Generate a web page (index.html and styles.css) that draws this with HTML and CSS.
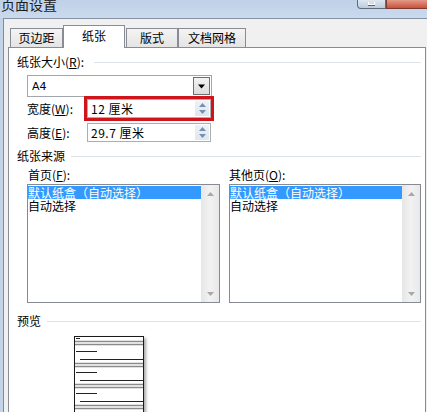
FILE: index.html
```html
<!DOCTYPE html>
<html lang="zh-CN">
<head>
<meta charset="utf-8">
<title>页面设置</title>
<link rel="stylesheet" href="styles.css">
</head>
<body>
<div class="window">
  <div class="titlebar">
    <span class="title">页面设置</span>
    <div class="caption">
      <span class="cap-max"><i class="cap-max-glyph"></i></span>
      <span class="cap-close"></span>
    </div>
  </div>
  <div class="client">
    <div class="tabs">
      <div class="tab t1">页边距</div>
      <div class="tab t2 active">纸张</div>
      <div class="tab t3">版式</div>
      <div class="tab t4">文档网格</div>
    </div>
    <div class="panel">
      <div class="group first"><span>纸张大小(<u>R</u>):</span><i class="rule"></i></div>
      <div class="select"><span class="select-text">A4</span><span class="drop"><svg width="9" height="5" viewBox="0 0 9 5"><path d="M1 0.5 H8 L4.5 4.5 Z" fill="#000"/></svg></span></div>
      <div class="field f-width">
        <span class="label">宽度(<u>W</u>):</span>
        <div class="spin mark"><span class="spin-text">12 厘米</span><span class="spinbtns"><svg width="7" height="4" viewBox="0 0 7 4"><path d="M3.5 0 L7 4 H0 Z" fill="#7890b0"/></svg><svg width="7" height="4" viewBox="0 0 7 4"><path d="M0 0 H7 L3.5 4 Z" fill="#7890b0"/></svg></span></div>
      </div>
      <div class="field f-height">
        <span class="label">高度(<u>E</u>):</span>
        <div class="spin"><span class="spin-text">29.7 厘米</span><span class="spinbtns"><svg width="7" height="4" viewBox="0 0 7 4"><path d="M3.5 0 L7 4 H0 Z" fill="#7890b0"/></svg><svg width="7" height="4" viewBox="0 0 7 4"><path d="M0 0 H7 L3.5 4 Z" fill="#7890b0"/></svg></span></div>
      </div>
      <div class="group source"><span>纸张来源</span><i class="rule"></i></div>
      <div class="columns">
        <div class="col">
          <div class="col-label">首页(<u>F</u>):</div>
          <div class="listbox">
            <ul class="items">
              <li class="sel">默认纸盒（自动选择）</li>
              <li>自动选择</li>
            </ul>
            <div class="scrollbar">
              <span class="arrow"><svg width="7" height="4" viewBox="0 0 7 4"><path d="M3.5 0 L7 4 H0 Z" fill="#a8a8a8"/></svg></span>
              <span class="arrow"><svg width="7" height="4" viewBox="0 0 7 4"><path d="M0 0 H7 L3.5 4 Z" fill="#a8a8a8"/></svg></span>
            </div>
          </div>
        </div>
        <div class="col">
          <div class="col-label">其他页(<u>O</u>):</div>
          <div class="listbox">
            <ul class="items">
              <li class="sel">默认纸盒（自动选择）</li>
              <li>自动选择</li>
            </ul>
            <div class="scrollbar">
              <span class="arrow"><svg width="7" height="4" viewBox="0 0 7 4"><path d="M3.5 0 L7 4 H0 Z" fill="#a8a8a8"/></svg></span>
              <span class="arrow"><svg width="7" height="4" viewBox="0 0 7 4"><path d="M0 0 H7 L3.5 4 Z" fill="#a8a8a8"/></svg></span>
            </div>
          </div>
        </div>
      </div>
      <div class="group preview-title"><span>预览</span><i class="rule"></i></div>
      <div class="page">
        <svg width="68" height="90" viewBox="0 0 68 90">
          <g stroke="#222" stroke-width="1">
            <line x1="1" y1="1.5" x2="5" y2="1.5"/>
            <line x1="1" y1="14.5" x2="22" y2="14.5"/>
            <line x1="5" y1="22.5" x2="68" y2="22.5"/>
            <line x1="1" y1="35.5" x2="22" y2="35.5"/>
            <line x1="5" y1="43.5" x2="68" y2="43.5"/>
            <line x1="1" y1="56.5" x2="22" y2="56.5"/>
            <line x1="5" y1="64.5" x2="68" y2="64.5"/>
            <line x1="1" y1="77.5" x2="22" y2="77.5"/>
            <line x1="5" y1="85.5" x2="68" y2="85.5"/>
          </g>
          <g stroke="#8a8a8a" stroke-width="1.5">
            <line x1="0" y1="4.5" x2="68" y2="4.5"/>
            <line x1="0" y1="7.5" x2="68" y2="7.5"/>
            <line x1="0" y1="26.5" x2="68" y2="26.5"/>
            <line x1="0" y1="29.5" x2="68" y2="29.5"/>
            <line x1="0" y1="47.5" x2="68" y2="47.5"/>
            <line x1="0" y1="50.5" x2="68" y2="50.5"/>
            <line x1="0" y1="68.5" x2="68" y2="68.5"/>
            <line x1="0" y1="71.5" x2="68" y2="71.5"/>
          </g>
        </svg>
      </div>
    </div>
  </div>
</div>
</body>
</html>
```
FILE: styles.css
```css
* { box-sizing: border-box; margin: 0; padding: 0; }
html, body { width: 427px; height: 412px; overflow: hidden; }
body {
  background: #c3d4e9;
  font-family: "Noto Sans CJK SC", "Liberation Sans", sans-serif;
  font-size: 12px;
  color: #000;
}
u { text-decoration: underline; }
.window { display: flex; flex-direction: column; height: 412px; }

.titlebar {
  height: 18px;
  display: flex;
  align-items: flex-start;
  background: linear-gradient(#bfd1e8, #cbdaed);
  overflow: hidden;
}
.title {
  font-size: 14px;
  line-height: 14px;
  margin-top: -3px;
  margin-left: 1px;
  color: #1c1c1c;
}
.caption { margin-left: auto; display: flex; }
.cap-max {
  width: 29px; height: 9px;
  border: 1px solid #5f6c7e; border-top: none;
  border-radius: 0 0 0 4px;
  background: linear-gradient(#dfe7f1, #bccbdd);
  display: flex; justify-content: center;
}
.cap-max-glyph {
  width: 7px; height: 3px; margin-top: 2px;
  border: 1px solid #fff; border-top: none;
  box-shadow: 0 1px 0 #56637a;
}
.cap-close {
  width: 41px; height: 9px;
  border: 1px solid #7d3b30; border-top: none; border-right: none;
  background: linear-gradient(#e39a88, #c9513a);
}

.client {
  flex: 1;
  min-height: 0;
  margin-left: 3px;
  border-left: 1px solid #7f8b9c;
  border-top: 1px solid #8391a3;
  background: #f0f0f0;
  display: flex;
  flex-direction: column;
}

.tabs {
  display: flex;
  align-items: flex-end;
  padding: 6px 0 0 6px;
  margin-bottom: -1px;
  position: relative;
  z-index: 1;
}
.tab {
  height: 20px;
  line-height: 18px;
  text-align: center;
  border: 1px solid #898c95;
  background: linear-gradient(#f4f4f4, #e4e4e4);
  font-size: 12px;
}
.tab.active {
  height: 23px;
  line-height: 20px;
  border-bottom: none;
  background: #fff;
}
.t1 { width: 53px; }
.t2 { width: 62px; }
.t3 { width: 52px; margin-left: 1px; }
.t4 { width: 68px; }

.panel {
  flex: 1;
  margin-left: 4px;
  width: 418px;
  border: 1px solid #898c95;
  border-bottom: none;
  background: #fff;
  display: flex;
  flex-direction: column;
}

.group {
  display: flex;
  align-items: center;
  height: 14px;
  line-height: 14px;
  padding-left: 8px;
  padding-right: 4px;
}
.group .rule {
  flex: 1;
  height: 1px;
  background: #dde3e9;
  margin-left: 6px;
}
.group.first { margin-top: 7px; }
.group.first .rule { margin-left: 10px; }
.group.source { margin-top: 7px; }
.group.preview-title { margin-top: 11px; }

.select {
  margin: 6px 0 0 18px;
  width: 185px;
  height: 22px;
  border: 1px solid #a2a6ad;
  background: #fff;
  display: flex;
  align-items: center;
  padding: 1px 1px 1px 4px;
}
.select-text { flex: 1; font-family: "DejaVu Sans", "Noto Sans CJK SC", sans-serif; font-size: 11px; }
.drop {
  width: 17px;
  height: 18px;
  border: 1px solid #707070;
  background: linear-gradient(#f3f3f3, #dcdcdc);
  display: flex;
  align-items: center;
  justify-content: center;
}

.field {
  display: flex;
  align-items: center;
  padding-left: 18px;
}
.f-width { margin-top: 2px; }
.f-height { margin-top: 5px; }
.label { width: 60px; }
.spin {
  width: 124px;
  height: 19px;
  border: 1px solid #abadb3;
  background: #fff;
  display: flex;
  align-items: center;
  padding: 0 1px 0 3px;
}
.spin.mark { outline: 3px solid #d0141c; }
.spin-text { flex: 1; letter-spacing: 0.5px; }
.spinbtns {
  width: 14px;
  height: 15px;
  background: linear-gradient(#eef2f7, #dfe6ef);
  display: flex;
  flex-direction: column;
  align-items: center;
  justify-content: space-around;
  padding: 1px 0;
}
.spinbtns svg { display: block; }

.columns {
  display: grid;
  grid-template-columns: 193px 192px;
  column-gap: 9px;
  padding-left: 18px;
  margin-top: 5px;
}
.col-label { height: 14px; line-height: 14px; padding-left: 1px; }
.col + .col .col-label { padding-left: 0; }
.listbox {
  margin-top: 2px;
  height: 119px;
  border: 1px solid #868a92;
  background: #fff;
  display: flex;
}
.items { flex: 1; list-style: none; padding-top: 1px; }
.items li {
  height: 14px;
  line-height: 14px;
  white-space: nowrap;
}
.items li.sel { height: 13px; line-height: 13px; background: #3399ff; color: #fff; }
.scrollbar {
  width: 18px;
  background: linear-gradient(90deg, #e6e6e6, #f2f2f2 50%, #e8e8e8);
  display: flex;
  flex-direction: column;
  justify-content: space-between;
}
.arrow {
  height: 17px;
  display: flex;
  align-items: center;
  justify-content: center;
}
.arrow svg { display: block; }

.page {
  margin: 8px 0 0 65px;
  width: 70px;
  height: 90px;
  border: 1px solid #1a1a1a;
  background: #fff;
  box-shadow: 2px 2px 3px rgba(0, 0, 0, 0.35);
}
.page svg { display: block; }
```
